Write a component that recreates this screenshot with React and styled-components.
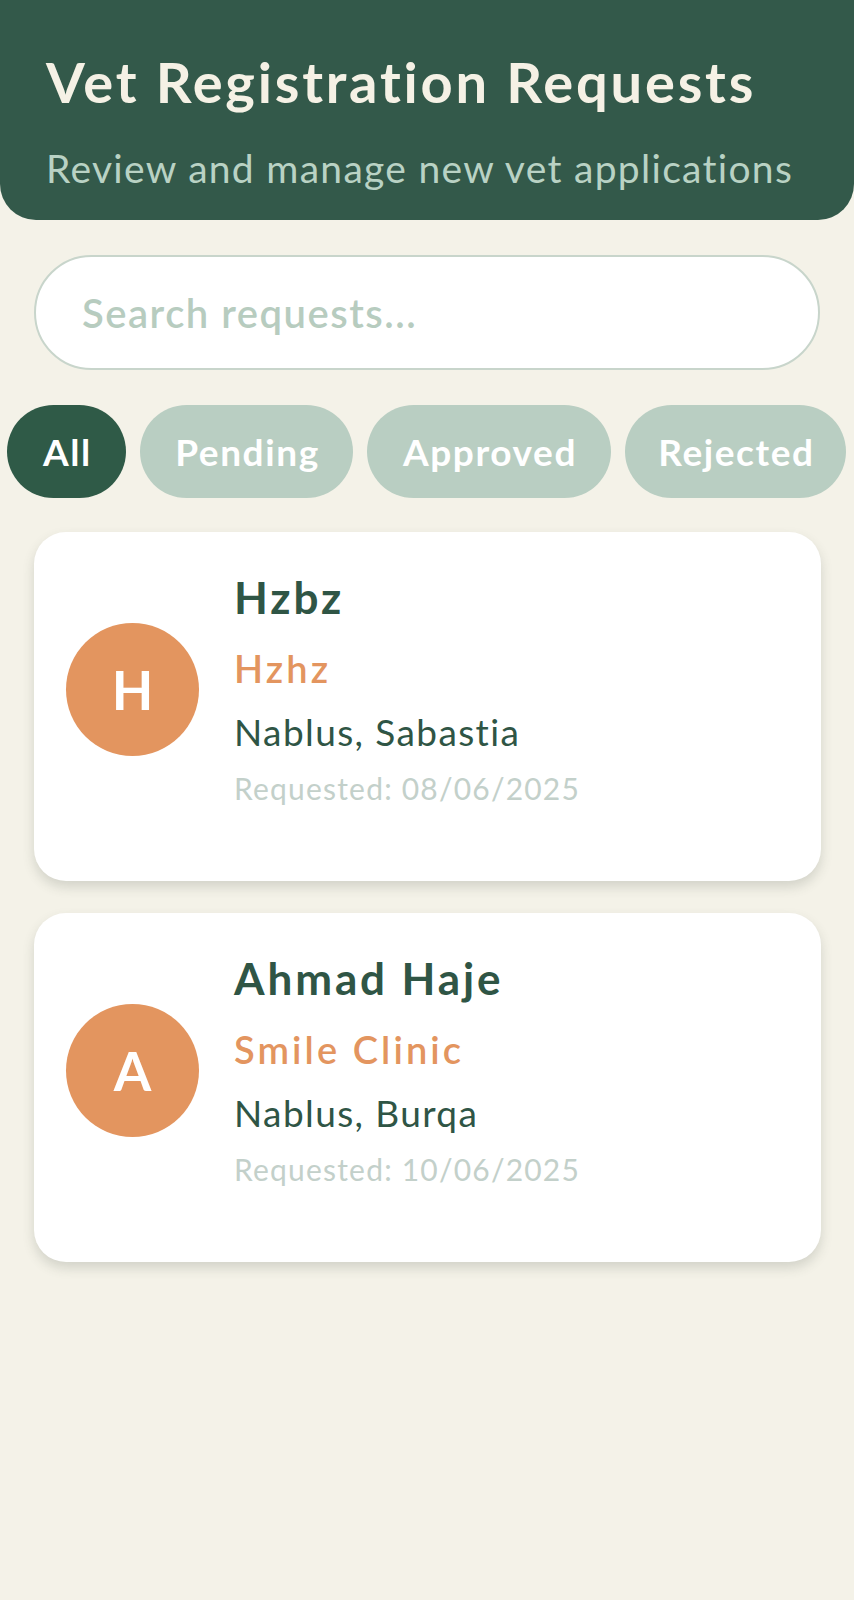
import React from "react";
import styled, { createGlobalStyle } from "styled-components";

const GlobalStyle = createGlobalStyle`
  html, body {
    margin: 0;
    padding: 0;
    background: #f4f2e8;
  }
  * { box-sizing: border-box; }
  body {
    font-family: Lato, "Open Sans", "Noto Sans", sans-serif;
    font-variant-ligatures: none;
  }
`;

const Page = styled.div`
  min-height: 1600px;
  background: #f4f2e8;
  overflow: hidden;
`;

const Header = styled.header`
  height: 220px;
  background: #33594a;
  border-radius: 0 0 36px 36px;
  padding: 48px 46px 0;
  display: flex;
  flex-direction: column;
`;

const Title = styled.h1`
  margin: 0;
  font-size: 56px;
  line-height: 67px;
  font-weight: 700;
  letter-spacing: 2.8px;
  color: #f5f1e5;
  white-space: nowrap;
  font-variant-ligatures: none;
`;

const Subtitle = styled.p`
  margin: 30px 0 0;
  font-size: 39px;
  line-height: 47px;
  font-weight: 400;
  letter-spacing: 1.3px;
  color: #b9d2c4;
  white-space: nowrap;
  font-variant-ligatures: none;
`;

const Content = styled.div`
  padding: 35px 34px 0;
`;

const SearchInput = styled.input`
  display: block;
  width: 786px;
  height: 115px;
  border: 2px solid #c8d5cb;
  border-radius: 58px;
  background: #ffffff;
  padding: 0 46px;
  font-family: Lato, "Open Sans", sans-serif;
  font-size: 40px;
  font-weight: 600;
  letter-spacing: 1.5px;
  color: #33594a;
  outline: none;
  &::placeholder {
    color: #b7ccbf;
  }
`;

const ChipRow = styled.div`
  display: flex;
  gap: 14px;
  margin-top: 35px;
  padding-left: 7px;
  white-space: nowrap;
`;

const Chip = styled.button`
  flex: 0 0 auto;
  width: ${(p) => p.$w}px;
  height: 93px;
  border: none;
  border-radius: 47px;
  background: ${(p) => (p.$active ? "#2f5a47" : "#b9cec2")};
  color: #ffffff;
  font-family: Lato, "Open Sans", sans-serif;
  font-size: 37px;
  font-weight: 700;
  letter-spacing: 1.6px;
  display: flex;
  align-items: center;
  justify-content: center;
  padding: 0 0 0 2px;
`;

const CardList = styled.div`
  display: flex;
  flex-direction: column;
  gap: 32px;
  padding: 34px 34px 0;
`;

const Card = styled.div`
  width: 787px;
  height: 349px;
  background: #ffffff;
  border-radius: 32px;
  box-shadow: 0 6px 12px rgba(60, 70, 60, 0.18);
  padding: 24px 32px 58px;
  display: flex;
  align-items: center;
  gap: 35px;
`;

const Avatar = styled.div`
  flex: 0 0 auto;
  width: 133px;
  height: 133px;
  border-radius: 50%;
  background: #e3955f;
  color: #ffffff;
  font-size: 54px;
  font-weight: 700;
  display: flex;
  align-items: center;
  justify-content: center;
`;

const Info = styled.div`
  display: flex;
  flex-direction: column;
`;

const Name = styled.div`
  font-size: 44px;
  line-height: 50px;
  font-weight: 700;
  letter-spacing: 2.9px;
  color: #2f5545;
`;

const Clinic = styled.div`
  margin-top: 21px;
  font-size: 38px;
  line-height: 50px;
  font-weight: 600;
  letter-spacing: 3.1px;
  color: #e3955f;
`;

const Location = styled.div`
  margin-top: 14px;
  font-size: 37px;
  line-height: 50px;
  font-weight: 400;
  letter-spacing: 1.4px;
  color: #2f5545;
`;

const Requested = styled.div`
  margin-top: 11px;
  font-size: 30px;
  line-height: 40px;
  font-weight: 400;
  letter-spacing: 1.2px;
  color: #c3d0ca;
`;

const chips = [
  { label: "All", w: 119, active: true },
  { label: "Pending", w: 213 },
  { label: "Approved", w: 244 },
  { label: "Rejected", w: 221 },
];

const requests = [
  { name: "Hzbz", clinic: "Hzhz", location: "Nablus, Sabastia", date: "08/06/2025" },
  { name: "Ahmad Haje", clinic: "Smile Clinic", location: "Nablus, Burqa", date: "10/06/2025" },
];

export default function App() {
  return (
    <Page>
      <GlobalStyle />
      <Header>
        <Title>Vet Registration Requests</Title>
        <Subtitle>Review and manage new vet applications</Subtitle>
      </Header>
      <Content>
        <SearchInput placeholder="Search requests..." />
      </Content>
      <ChipRow>
        {chips.map((c) => (
          <Chip key={c.label} $w={c.w} $active={c.active}>
            {c.label}
          </Chip>
        ))}
      </ChipRow>
      <CardList>
        {requests.map((r) => (
          <Card key={r.name}>
            <Avatar>{r.name.charAt(0)}</Avatar>
            <Info>
              <Name>{r.name}</Name>
              <Clinic>{r.clinic}</Clinic>
              <Location>{r.location}</Location>
              <Requested>Requested: {r.date}</Requested>
            </Info>
          </Card>
        ))}
      </CardList>
    </Page>
  );
}
